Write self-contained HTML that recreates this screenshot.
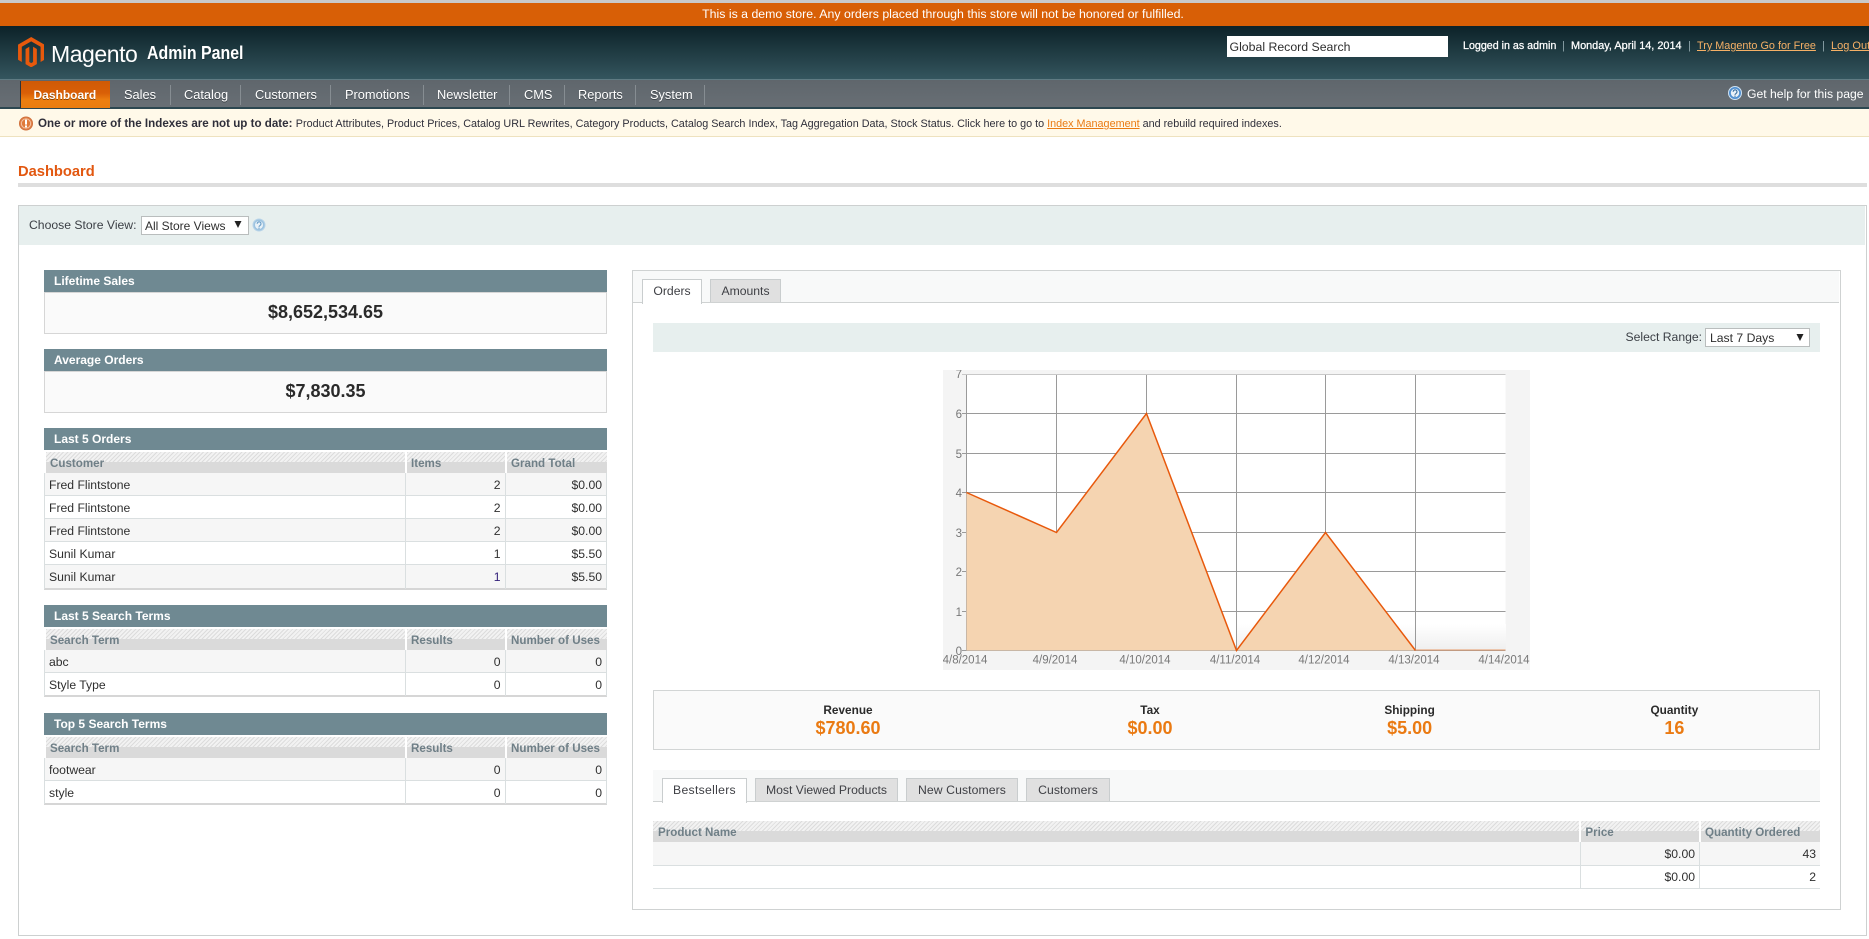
<!DOCTYPE html>
<html><head><meta charset="utf-8"><title>Dashboard / Magento Admin</title>
<style>
html,body{margin:0;padding:0;background:#fff}
body{width:1869px;height:939px;position:relative;overflow:hidden;font-family:"Liberation Sans",Arial,sans-serif;font-size:12px;color:#2f2f2f}
div,span,a,svg{position:absolute}
.t{white-space:nowrap;line-height:16px;height:16px}
.b{font-weight:bold}
a{white-space:nowrap}
.nav{color:#fff;font-size:12.8px;top:87px;text-shadow:0 1px 0 #3d4449}
.sep{width:1px;top:85px;height:20px;background:#868d92}
.boxh{left:44px;width:563px;height:22px;background:#6f8992}
.boxh span{left:10px;top:3px;color:#fff;font-weight:bold;font-size:12px;line-height:16px;white-space:nowrap}
.boxb{left:44px;width:561px;height:40px;background:#fafafa;border:1px solid #d6d6d6}
.val{left:44px;width:563px;text-align:center;font-weight:bold;font-size:18px;line-height:22px;color:#2a2a2a;white-space:nowrap}
.th{height:21px;background:linear-gradient(#0000 0,#0000 10px,#dadada 10px,#dadada 21px),repeating-linear-gradient(135deg,#dcdcdc 0,#dcdcdc 1px,#f2f2f2 1px,#f2f2f2 3px)}
.thl{color:#6f7f87;font-weight:bold;font-size:11.6px;line-height:16px;white-space:nowrap}
.r{height:22px;border-bottom:1px solid #dadfe0}
.odd{background:#f6f6f6}
.td{font-size:12.2px;line-height:16px;white-space:nowrap;color:#2f2f2f}
.vl{width:1px;background:#dadfe0}
.vw{width:2px;background:#fff}
.tab{height:22px;top:0;background:#e0e0e0;border:1px solid #c9cdce;border-bottom:0;text-align:center;font-size:12.2px;line-height:23px;color:#3f4045;white-space:nowrap}
.tab.on{background:#fff;height:24px}
.sl{font-weight:bold;font-size:11.8px;line-height:16px;white-space:nowrap;text-align:center;color:#2a2a2a;width:160px}
.sv{font-weight:bold;font-size:18px;line-height:20px;white-space:nowrap;text-align:center;color:#ea7a12;width:160px}
svg text{font-family:"Liberation Sans",Arial,sans-serif;font-size:11.5px;fill:#777}
</style></head><body>

<div style="left:0;top:0;width:1869px;height:3px;background:#c9c9c9"></div>
<div style="left:0;top:3px;width:1869px;height:23px;background:#d85f06"></div>
<div class="t" style="left:0;width:1886px;top:6px;text-align:center;color:#fff;font-size:12.33px">This is a demo store. Any orders placed through this store will not be honored or fulfilled.</div>

<div style="left:0;top:26px;width:1869px;height:53px;background:linear-gradient(#0c2228,#34555e)"></div>
<div style="left:0;top:79px;width:1869px;height:1px;background:#5f7b83"></div>

<svg style="left:17.7px;top:36.7px" width="26.4" height="30.4" viewBox="1.6 0 20.8 24"><path fill="#e8590c" d="M12 24l-4.455-2.572v-12l2.97-1.715v12.001l1.485.902 1.485-.902V7.714l2.97 1.715v12L12 24zM22.391 6v12l-2.969 1.714V7.715L12 3.43 4.574 7.714v12L1.609 18V6L12 0l10.391 6z"/></svg>
<div class="t" style="left:51px;top:41px;height:26px;line-height:26px;font-size:23px;color:#fff;letter-spacing:-.45px">Magento</div>
<div class="t" style="left:147px;top:42px;height:22px;line-height:22px;font-size:18px;font-weight:bold;color:#fff;transform:scaleX(.885);transform-origin:0 0;text-shadow:1px 1px 0 #1b3036">Admin Panel</div>

<div class="t" style="left:1226.5px;top:36px;width:218px;height:21px;background:#fff;padding-left:3px;line-height:23px;font-size:12.3px;color:#2f2f2f">Global Record Search</div>
<div class="t" style="left:1463px;top:38px;color:#fff;font-size:10.7px;-webkit-text-stroke:.25px #fff">Logged in as admin</div>
<div class="t" style="left:1562px;top:38px;color:#8fa5ab;font-size:11px">|</div>
<div class="t" style="left:1571px;top:38px;color:#fff;font-size:10.9px;-webkit-text-stroke:.25px #fff">Monday, April 14, 2014</div>
<div class="t" style="left:1688px;top:38px;color:#8fa5ab;font-size:11px">|</div>
<a class="t" style="left:1697px;top:38px;color:#f5b066;font-size:10.85px;text-decoration:underline">Try Magento Go for Free</a>
<div class="t" style="left:1822px;top:38px;color:#8fa5ab;font-size:11px">|</div>
<a class="t" style="left:1831px;top:38px;color:#f5b066;font-size:11px;text-decoration:underline">Log Out</a>

<div style="left:0;top:80px;width:1869px;height:27px;background:linear-gradient(#5f666c,#686f75)"></div>
<div style="left:0;top:107px;width:1869px;height:2px;background:#2c4750"></div>
<div style="left:20px;top:81px;width:1px;height:27px;background:#2d3338"></div>
<div style="left:21px;top:81px;width:89px;height:27px;background:linear-gradient(#cf5a05,#d95f07 45%,#ec7e10 70%,#ea7d10)"></div>
<div class="t nav b" style="left:33.5px;font-size:12px;text-shadow:0 1px 0 #8a4306">Dashboard</div>
<div class="t nav" style="left:124px">Sales</div><div class="sep" style="left:170px"></div>
<div class="t nav" style="left:184px">Catalog</div><div class="sep" style="left:240px"></div>
<div class="t nav" style="left:255px">Customers</div><div class="sep" style="left:330px"></div>
<div class="t nav" style="left:345px">Promotions</div><div class="sep" style="left:423px"></div>
<div class="t nav" style="left:437px">Newsletter</div><div class="sep" style="left:509px"></div>
<div class="t nav" style="left:524px">CMS</div><div class="sep" style="left:564px"></div>
<div class="t nav" style="left:578px">Reports</div><div class="sep" style="left:635px"></div>
<div class="t nav" style="left:650px">System</div><div class="sep" style="left:704px"></div>

<svg style="left:1727.5px;top:86px" width="14" height="14" viewBox="0 0 14 14"><circle cx="7" cy="7" r="6.5" fill="#4f8fd0" stroke="#cfe2f2"/><circle cx="7" cy="7" r="4.2" fill="#e9f1f8"/><path d="M5.2 5.8a1.9 1.9 0 1 1 3 1.5c-.8.6-1.2.9-1.2 1.6" fill="none" stroke="#3a6f9f" stroke-width="1.1"/><rect x="6.4" y="9.6" width="1.2" height="1.2" fill="#3a6f9f"/></svg>
<div class="t" style="left:1747px;top:86px;color:#fff;font-size:12.2px">Get help for this page</div>

<div style="left:0;top:109px;width:1869px;height:27px;background:#fff9e9;border-bottom:1px solid #eee2bf"></div>
<svg style="left:19px;top:116px" width="14" height="15" viewBox="0 0 14 15"><circle cx="7" cy="7.5" r="6.5" fill="#e2854f" stroke="#d0703a"/><circle cx="7" cy="7.5" r="4.6" fill="#e07a3a" stroke="#f6d0b4" stroke-width=".8"/><rect x="6" y="3.6" width="2" height="5" fill="#fff"/><rect x="6" y="9.4" width="2" height="2" fill="#fff"/></svg>
<div class="t" style="left:38px;top:115px;font-size:11.9px;color:#2f2f3a"><b style="font-size:11.6px">One or more of the Indexes are not up to date:</b> <span style="position:static;font-size:10.8px">Product Attributes, Product Prices, Catalog URL Rewrites, Category Products, Catalog Search Index, Tag Aggregation Data, Stock Status. Click here to go to <a style="position:static;color:#ea7a12;text-decoration:underline">Index Management</a> and rebuild required indexes.</span></div>

<div class="t b" style="left:18px;top:164px;font-size:14.7px;color:#e2570f">Dashboard</div>
<div style="left:18px;top:183px;width:1849px;height:4px;background:#dedede"></div>

<div style="left:18px;top:205px;width:1847px;height:729px;border:1px solid #cdd0d0;border-width:1.4px"></div>
<div style="left:19.4px;top:206.4px;width:1846px;height:39px;background:#e7efee"></div>
<div class="t" style="left:29px;top:217px;font-size:12.2px;color:#3b3f45">Choose Store View:</div>
<div style="left:140.5px;top:216px;width:106px;height:17px;background:#fff;border:1px solid #b9bdbd"></div>
<div class="t" style="left:145px;top:218px;font-size:12px;color:#2f2f2f">All Store Views</div>
<svg style="left:233.5px;top:221px" width="8" height="7"><path d="M0.5 0H7.5L4 7z" fill="#222"/></svg>
<svg style="left:252px;top:218px" width="14" height="14" viewBox="0 0 14 14"><circle cx="7" cy="7" r="6" fill="#9cc3e0" stroke="#b9d4e8"/><circle cx="7" cy="7" r="4" fill="#e8f1f7"/><path d="M5.2 5.8a1.9 1.9 0 1 1 3 1.5c-.8.6-1.2.9-1.2 1.6" fill="none" stroke="#6a9ec8" stroke-width="1.1"/><rect x="6.4" y="9.6" width="1.2" height="1.2" fill="#6a9ec8"/></svg>

<!-- LEFT COLUMN -->
<div class="boxh" style="top:270px"><span>Lifetime Sales</span></div>
<div class="boxb" style="top:292px"></div>
<div class="val" style="top:301px">$8,652,534.65</div>

<div class="boxh" style="top:349px"><span>Average Orders</span></div>
<div class="boxb" style="top:371px"></div>
<div class="val" style="top:380px">$7,830.35</div>

<div class="boxh" style="top:428px"><span>Last 5 Orders</span></div>
<div style="left:44px;top:450px;width:563px;height:140px;background:#fff"></div>
<div class="th" style="left:46px;top:452px;width:561px"></div>
<div class="thl" style="left:50px;top:456px">Customer</div><div class="thl" style="left:411px;top:456px">Items</div><div class="thl" style="left:511px;top:456px">Grand Total</div>
<div class="r odd" style="left:44px;top:473px;width:563px;height:22px"></div>
<div class="r" style="left:44px;top:496px;width:563px"></div>
<div class="r odd" style="left:44px;top:519px;width:563px"></div>
<div class="r" style="left:44px;top:542px;width:563px"></div>
<div class="r odd" style="left:44px;top:565px;width:563px;height:23px;border-bottom:2px solid #d6d6d6"></div>
<div class="vw" style="left:405px;top:452px;height:21px"></div><div class="vw" style="left:505px;top:452px;height:21px"></div>
<div class="vl" style="left:405px;top:473px;height:116px"></div><div class="vl" style="left:505px;top:473px;height:116px"></div>
<div class="vl" style="left:44px;top:473px;height:116px"></div><div class="vl" style="left:606px;top:473px;height:116px"></div>
<div class="td" style="left:49px;top:477px">Fred Flintstone</div><div class="td" style="left:405px;width:95.5px;text-align:right;top:477px">2</div><div class="td" style="left:505px;width:97px;text-align:right;top:477px">$0.00</div>
<div class="td" style="left:49px;top:500px">Fred Flintstone</div><div class="td" style="left:405px;width:95.5px;text-align:right;top:500px">2</div><div class="td" style="left:505px;width:97px;text-align:right;top:500px">$0.00</div>
<div class="td" style="left:49px;top:523px">Fred Flintstone</div><div class="td" style="left:405px;width:95.5px;text-align:right;top:523px">2</div><div class="td" style="left:505px;width:97px;text-align:right;top:523px">$0.00</div>
<div class="td" style="left:49px;top:546px">Sunil Kumar</div><div class="td" style="left:405px;width:95.5px;text-align:right;top:546px">1</div><div class="td" style="left:505px;width:97px;text-align:right;top:546px">$5.50</div>
<div class="td" style="left:49px;top:569px">Sunil Kumar</div><div class="td" style="left:405px;width:95.5px;text-align:right;top:569px;color:#33207a">1</div><div class="td" style="left:505px;width:97px;text-align:right;top:569px">$5.50</div>

<div class="boxh" style="top:605px"><span>Last 5 Search Terms</span></div>
<div class="th" style="left:46px;top:629px;width:561px"></div>
<div class="thl" style="left:50px;top:633px">Search Term</div><div class="thl" style="left:411px;top:633px">Results</div><div class="thl" style="left:511px;top:633px">Number of Uses</div>
<div class="r odd" style="left:44px;top:650px;width:563px;height:22px"></div>
<div class="r" style="left:44px;top:673px;width:563px;border-bottom:2px solid #d6d6d6"></div>
<div class="vw" style="left:405px;top:629px;height:21px"></div><div class="vw" style="left:505px;top:629px;height:21px"></div>
<div class="vl" style="left:405px;top:650px;height:46px"></div><div class="vl" style="left:505px;top:650px;height:46px"></div>
<div class="vl" style="left:44px;top:650px;height:46px"></div><div class="vl" style="left:606px;top:650px;height:46px"></div>
<div class="td" style="left:49px;top:654px">abc</div><div class="td" style="left:405px;width:95.5px;text-align:right;top:654px">0</div><div class="td" style="left:505px;width:97px;text-align:right;top:654px">0</div>
<div class="td" style="left:49px;top:677px">Style Type</div><div class="td" style="left:405px;width:95.5px;text-align:right;top:677px">0</div><div class="td" style="left:505px;width:97px;text-align:right;top:677px">0</div>

<div class="boxh" style="top:713px"><span>Top 5 Search Terms</span></div>
<div class="th" style="left:46px;top:737px;width:561px"></div>
<div class="thl" style="left:50px;top:741px">Search Term</div><div class="thl" style="left:411px;top:741px">Results</div><div class="thl" style="left:511px;top:741px">Number of Uses</div>
<div class="r odd" style="left:44px;top:758px;width:563px;height:22px"></div>
<div class="r" style="left:44px;top:781px;width:563px;border-bottom:2px solid #d6d6d6"></div>
<div class="vw" style="left:405px;top:737px;height:21px"></div><div class="vw" style="left:505px;top:737px;height:21px"></div>
<div class="vl" style="left:405px;top:758px;height:46px"></div><div class="vl" style="left:505px;top:758px;height:46px"></div>
<div class="vl" style="left:44px;top:758px;height:46px"></div><div class="vl" style="left:606px;top:758px;height:46px"></div>
<div class="td" style="left:49px;top:762px">footwear</div><div class="td" style="left:405px;width:95.5px;text-align:right;top:762px">0</div><div class="td" style="left:505px;width:97px;text-align:right;top:762px">0</div>
<div class="td" style="left:49px;top:785px">style</div><div class="td" style="left:405px;width:95.5px;text-align:right;top:785px">0</div><div class="td" style="left:505px;width:97px;text-align:right;top:785px">0</div>

<!-- RIGHT PANEL -->
<div style="left:632px;top:270px;width:1207px;height:638px;border:1px solid #cfd2d2"></div>
<div style="left:633px;top:271px;width:1206px;height:31px;background:#f8f9f9;border-bottom:1px solid #cfd2d2"></div>
<div style="left:632px;top:279px;width:160px;height:24px">
<div class="tab on" style="left:10px;width:58px">Orders</div>
<div class="tab" style="left:78px;width:69px">Amounts</div>
</div>
<div style="left:653px;top:323px;width:1167px;height:29px;background:#e7efee"></div>
<div class="t" style="left:1625.5px;top:329px;font-size:12.2px;color:#3b3f45">Select Range:</div>
<div style="left:1705px;top:328px;width:103px;height:17px;background:#fff;border:1px solid #b9bdbd"></div>
<div class="t" style="left:1710px;top:330px;font-size:12.2px;color:#2f2f2f">Last 7 Days</div>
<svg style="left:1796px;top:334px" width="8" height="7"><path d="M0.5 0H7.5L4 7z" fill="#222"/></svg>

<!-- CHART -->
<svg style="left:943px;top:370px" width="587" height="300" viewBox="943 370 587 300">
<rect x="943" y="370" width="587" height="300" fill="#f4f4f4"/>
<rect x="966.5" y="374.5" width="539" height="276" fill="#fff"/>
<defs><linearGradient id="g" x1="0" y1="0" x2="0" y2="1"><stop offset="0" stop-color="#fff"/><stop offset="1" stop-color="#efefef"/></linearGradient></defs>
<rect x="1237" y="624" width="269" height="26" fill="url(#g)"/>
<g stroke="#9a9a9a" stroke-width="1" fill="none">
<path d="M962 413.5H1505.5M962 453.5H1505.5M962 492.5H1505.5M962 532.5H1505.5M962 571.5H1505.5M962 611.5H1505.5M962 650.5H1505.5"/>
<path d="M966.5 374V651M1056.5 374V651M1146.5 374V651M1236.5 374V651M1325.5 374V651M1415.5 374V651"/>
<path d="M962 374.5H1505.5" stroke="#c8c8c8"/>
</g>
<path d="M966.5 492.5L1056.5 532.5L1146.5 413.5L1236.5 650.5L1325.5 532.5L1415.5 650.5L966.5 650.5Z" fill="#f5d4b1"/>
<path d="M966.5 492.5L1056.5 532.5L1146.5 413.5L1236.5 650.5L1325.5 532.5L1415.5 650.5" fill="none" stroke="#e8590c" stroke-width="1.5"/>
<path d="M1415.5 650H1505.5" fill="none" stroke="#e89a68" stroke-width="1"/>
<g text-anchor="end">
<text x="962" y="378">7</text><text x="962" y="418">6</text><text x="962" y="458">5</text><text x="962" y="497">4</text><text x="962" y="537">3</text><text x="962" y="576">2</text><text x="962" y="616">1</text><text x="962" y="655">0</text>
</g>
<g text-anchor="middle">
<text x="965" y="663.5">4/8/2014</text><text x="1055" y="663.5">4/9/2014</text><text x="1145" y="663.5">4/10/2014</text><text x="1235" y="663.5">4/11/2014</text><text x="1324" y="663.5">4/12/2014</text><text x="1414" y="663.5">4/13/2014</text><text x="1504" y="663.5">4/14/2014</text>
</g>
</svg>

<!-- STATS -->
<div style="left:653px;top:690px;width:1165px;height:58px;background:#fafafa;border:1px solid #d2d5d5"></div>
<div class="sl" style="left:768px;top:702px">Revenue</div><div class="sv" style="left:768px;top:718px">$780.60</div>
<div class="sl" style="left:1070px;top:702px">Tax</div><div class="sv" style="left:1070px;top:718px">$0.00</div>
<div class="sl" style="left:1329.6px;top:702px">Shipping</div><div class="sv" style="left:1329.6px;top:718px">$5.00</div>
<div class="sl" style="left:1594.4px;top:702px">Quantity</div><div class="sv" style="left:1594.4px;top:718px">16</div>

<!-- LOWER TABS -->
<div style="left:653px;top:770px;width:1167px;height:31px;background:#f8f9f9;border-bottom:1px solid #cfd2d2"></div>
<div style="left:653px;top:778px;width:500px;height:24px">
<div class="tab on" style="left:9px;width:83px;letter-spacing:.3px">Bestsellers</div>
<div class="tab" style="left:102px;width:141px">Most Viewed Products</div>
<div class="tab" style="left:253px;width:110px;letter-spacing:.1px">New Customers</div>
<div class="tab" style="left:373px;width:82px;letter-spacing:.1px">Customers</div>
</div>

<!-- BESTSELLERS TABLE -->
<div class="th" style="left:653px;top:821px;width:1167px"></div>
<div class="thl" style="left:658px;top:825px">Product Name</div><div class="thl" style="left:1585.4px;top:825px">Price</div><div class="thl" style="left:1705px;top:825px">Quantity Ordered</div>
<div class="r odd" style="left:653px;top:842px;width:1167px;height:23px"></div>
<div class="r" style="left:653px;top:866px;width:1167px"></div>
<div class="vw" style="left:1579px;top:821px;height:21px"></div><div class="vw" style="left:1699px;top:821px;height:21px"></div>
<div class="vl" style="left:1580px;top:842px;height:46px"></div><div class="vl" style="left:1699px;top:842px;height:46px"></div>
<div class="td" style="left:1580px;width:115px;text-align:right;top:846px">$0.00</div><div class="td" style="left:1699px;width:117px;text-align:right;top:846px">43</div>
<div class="td" style="left:1580px;width:115px;text-align:right;top:869px">$0.00</div><div class="td" style="left:1699px;width:117px;text-align:right;top:869px">2</div>

</body></html>
